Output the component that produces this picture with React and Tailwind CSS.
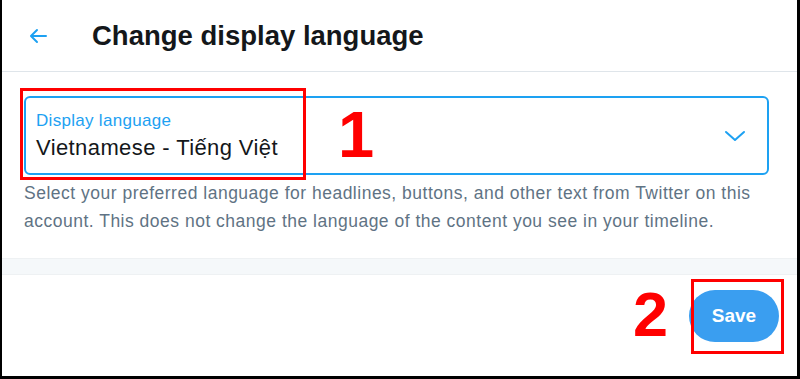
export default function App() {
  return (
    <div className="relative w-[800px] h-[379px] overflow-hidden bg-white border-l-2 border-r-[3px] border-b-[3px] border-black" style={{ fontFamily: '"Liberation Sans", Arial, sans-serif' }}>
      {/* Header */}
      <div className="h-[72px] flex items-center border-b border-[#dfe5ea]">
        <div className="w-[90px] pl-[24px] flex items-center">
          <svg width="24" height="24" viewBox="0 0 24 24" className="text-[#1da1f2]">
            <path d="M20 11H7.414l4.293-4.293a1 1 0 0 0-1.414-1.414l-6 6a1 1 0 0 0 0 1.414l6 6a1 1 0 0 0 1.414-1.414L7.414 13H20a1 1 0 1 0 0-2z" fill="currentColor" />
          </svg>
        </div>
        <h1 className="text-[27.5px] font-bold text-[#14171a]">Change display language</h1>
      </div>

      {/* Select */}
      <div className="pt-[24px] pl-[22px] pr-[28px]">
        <div className="h-[79px] border-2 border-[#1da1f2] rounded-[6px] flex items-center pl-[10px] pr-[20px]">
          <div className="flex-1 flex flex-col pt-[2px]">
            <span className="text-[17px] leading-[20px] tracking-[0.3px] text-[#1da1f2]">Display language</span>
            <span className="text-[22px] leading-[28px] tracking-[0.4px] text-[#14171a] mt-[3px]">Vietnamese - Tiếng Việt</span>
          </div>
          <svg width="24" height="24" viewBox="0 0 24 24" className="text-[#1da1f2]">
            <path d="M3 8l9 8 9-8" fill="none" stroke="currentColor" strokeWidth="2" strokeLinecap="round" strokeLinejoin="round" />
          </svg>
        </div>
        <p className="mt-[4px] text-[17.5px] leading-[28px] tracking-[0.5px] text-[#5f7384]">
          Select your preferred language for headlines, buttons, and other text from Twitter on this account. This does not change the language of the content you see in your timeline.
        </p>
      </div>

      {/* Gray band */}
      <div className="mt-[23px] h-[17px] bg-[#f5f8fa] border-y border-[#eef1f3]"></div>

      {/* Footer */}
      <div className="flex justify-end items-center pr-[18px] pt-[15px]">
        <button className="w-[90px] h-[52px] rounded-full bg-[#3a9ef0] text-white font-bold text-[19px]">Save</button>
      </div>

      {/* Annotations */}
      <div className="absolute left-[18px] top-[88px] w-[286px] h-[92px] border-[3px] border-[#ff0000]"></div>
      <div className="absolute left-[336px] top-[102px] text-[65px] font-bold text-[#ff0000] leading-none">1</div>
      <div className="absolute left-[689px] top-[279px] w-[93px] h-[75px] border-[3px] border-[#ff0000]"></div>
      <div className="absolute left-[631px] top-[283px] text-[63px] font-bold text-[#ff0000] leading-none">2</div>
    </div>
  );
}
